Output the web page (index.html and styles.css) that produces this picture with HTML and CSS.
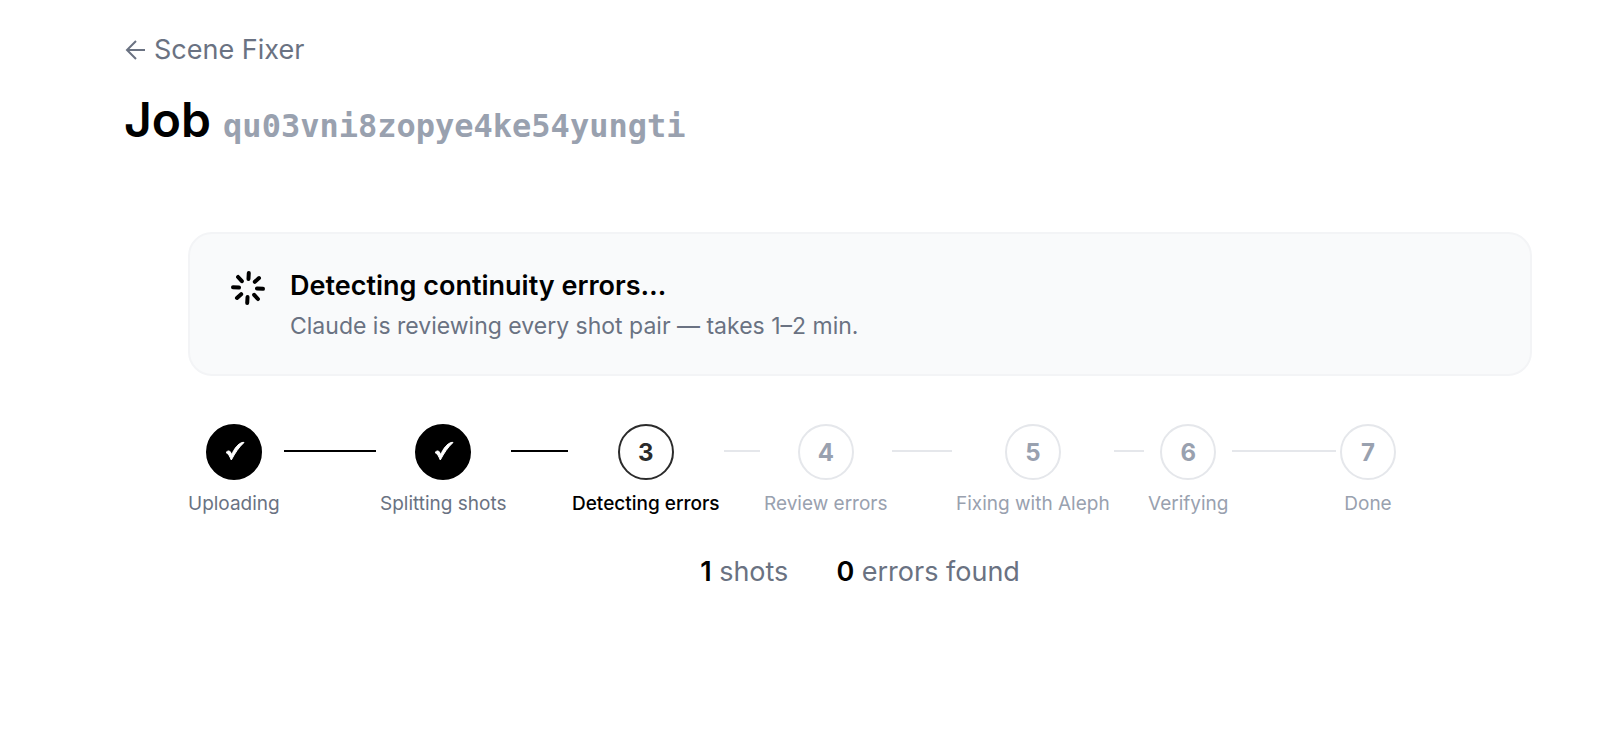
FILE: index.html
```html
<!DOCTYPE html>
<html lang="en">
<head>
    <meta charset="UTF-8">
    <meta name="viewport" content="width=device-width, initial-scale=1.0">
    <title>Scene Fixer</title>
    <link rel="stylesheet" href="styles.css">
</head>
<body>
    <main class="page">
        <a class="back-link" href="#">
            <svg class="arrow" viewBox="0 0 22 24" aria-hidden="true">
                <path d="M12 3L3 12l9 9M3 12h18"/>
            </svg>
            Scene Fixer
        </a>
        <h1>Job <span class="job-id">qu03vni8zopye4ke54yungti</span></h1>

        <div class="content">
            <section class="status-card">
                <svg class="spinner" viewBox="0 0 36 36" aria-hidden="true">
                    <g transform="rotate(3 18 18)">
                        <path d="M18 3v6M18 27v6M3 18h6M27 18h6M7.500 7.500l4 4M24.500 24.500l4 4M28.500 7.500l-4 4M11.500 24.500l-4 4"/>
                    </g>
                </svg>
                <div>
                    <h2>Detecting continuity errors…</h2>
                    <p>Claude is reviewing every shot pair — takes 1–2 min.</p>
                </div>
            </section>

            <ol class="steps">
                <li class="step done">
                    <div class="step-body">
                        <span class="circle">
                            <svg class="check" viewBox="-3 -1 22 22" aria-hidden="true"><path d="M0 10.500C1.500 8.600 3.600 8.400 4.400 10l1.300 2.600C8 7.200 12 1.200 17 .3l1 .2C13 5 9 11 5.300 18 4 15 2.500 11.500 0 10.500z"/></svg>
                        </span>
                        <span class="label">Uploading</span>
                    </div>
                    <div class="line"></div>
                </li>
                <li class="step done">
                    <div class="step-body">
                        <span class="circle">
                            <svg class="check" viewBox="-3 -1 22 22" aria-hidden="true"><path d="M0 10.500C1.500 8.600 3.600 8.400 4.400 10l1.300 2.600C8 7.200 12 1.200 17 .3l1 .2C13 5 9 11 5.300 18 4 15 2.500 11.500 0 10.500z"/></svg>
                        </span>
                        <span class="label">Splitting shots</span>
                    </div>
                    <div class="line"></div>
                </li>
                <li class="step current">
                    <div class="step-body"><span class="circle">3</span><span class="label">Detecting errors</span></div>
                    <div class="line"></div>
                </li>
                <li class="step">
                    <div class="step-body"><span class="circle">4</span><span class="label">Review errors</span></div>
                    <div class="line"></div>
                </li>
                <li class="step">
                    <div class="step-body"><span class="circle">5</span><span class="label">Fixing with Aleph</span></div>
                    <div class="line"></div>
                </li>
                <li class="step">
                    <div class="step-body"><span class="circle">6</span><span class="label">Verifying</span></div>
                    <div class="line"></div>
                </li>
                <li class="step">
                    <div class="step-body"><span class="circle">7</span><span class="label">Done</span></div>
                </li>
            </ol>

            <div class="stats">
                <span><strong>1</strong> shots</span>
                <span><strong>0</strong> errors found</span>
            </div>
        </div>
    </main>
</body>
</html>
```
FILE: styles.css
```css
body {
    margin: 0;
    background-color: #ffffff;
    color: #000000;
    font-family: Inter, "Liberation Sans", sans-serif;
}
.page {
    padding: 30px 4px 64px 124px;
}
.back-link {
    display: inline-flex;
    align-items: center;
    gap: 8px;
    font-size: 27px;
    line-height: 40px;
    color: #6a7282;
    text-decoration: none;
}
.arrow {
    width: 22px;
    height: 24px;
    fill: none;
    stroke: currentColor;
    stroke-width: 2;
}
h1 {
    margin: 18px 0 0;
    font-size: 48px;
    line-height: 64px;
    font-weight: 600;
}
.job-id {
    font-family: "DejaVu Sans Mono", monospace;
    font-size: 32px;
    font-weight: 700;
    color: #99a1af;
}
.content {
    padding: 74px 64px 0;
}
.status-card {
    display: flex;
    align-items: flex-start;
    gap: 24px;
    padding: 32px 40px;
    background-color: #f9fafb;
    border: 2px solid #f3f4f6;
    border-radius: 24px;
}
.spinner {
    flex: none;
    width: 36px;
    height: 36px;
    margin-top: 4px;
    fill: none;
    stroke: #000000;
    stroke-width: 4;
    stroke-linecap: round;
}
h2 {
    margin: 0;
    font-size: 27px;
    line-height: 40px;
    font-weight: 600;
}
.status-card p {
    margin: 4px 0 0;
    font-size: 23px;
    line-height: 32px;
    color: #6a7282;
}
.steps {
    display: flex;
    margin: 48px 0 0;
    padding: 0;
    list-style: none;
}
.step {
    display: flex;
    flex: 1 1 0;
    min-width: 0;
    align-items: flex-start;
    color: #99a1af;
}
.step-body {
    display: flex;
    flex-direction: column;
    align-items: center;
    gap: 8px;
}
.circle {
    display: flex;
    align-items: center;
    justify-content: center;
    box-sizing: border-box;
    width: 56px;
    height: 56px;
    border: 2px solid #e5e7eb;
    border-radius: 50%;
    font-size: 24px;
    font-weight: 700;
}
.check {
    width: 22px;
    height: 22px;
    fill: currentColor;
    stroke: currentColor;
    stroke-width: 1;
}
.label {
    font-size: 19px;
    line-height: 32px;
    white-space: nowrap;
}
.line {
    flex: 1;
    height: 2px;
    margin: 26px 4px 0;
    background-color: #e5e7eb;
}
.done .circle {
    background-color: #000000;
    border-color: #000000;
    color: #ffffff;
}
.done .label {
    color: #6a7282;
}
.done .line {
    background-color: #000000;
}
.current .circle {
    border-color: #2b2b2b;
    color: #2b2b2b;
}
.current .label {
    color: #000000;
    font-weight: 500;
}
.stats {
    display: flex;
    justify-content: center;
    gap: 48px;
    margin-top: 32px;
    font-size: 27px;
    line-height: 40px;
    color: #6a7282;
}
.stats strong {
    color: #000000;
    font-weight: 600;
}
```
